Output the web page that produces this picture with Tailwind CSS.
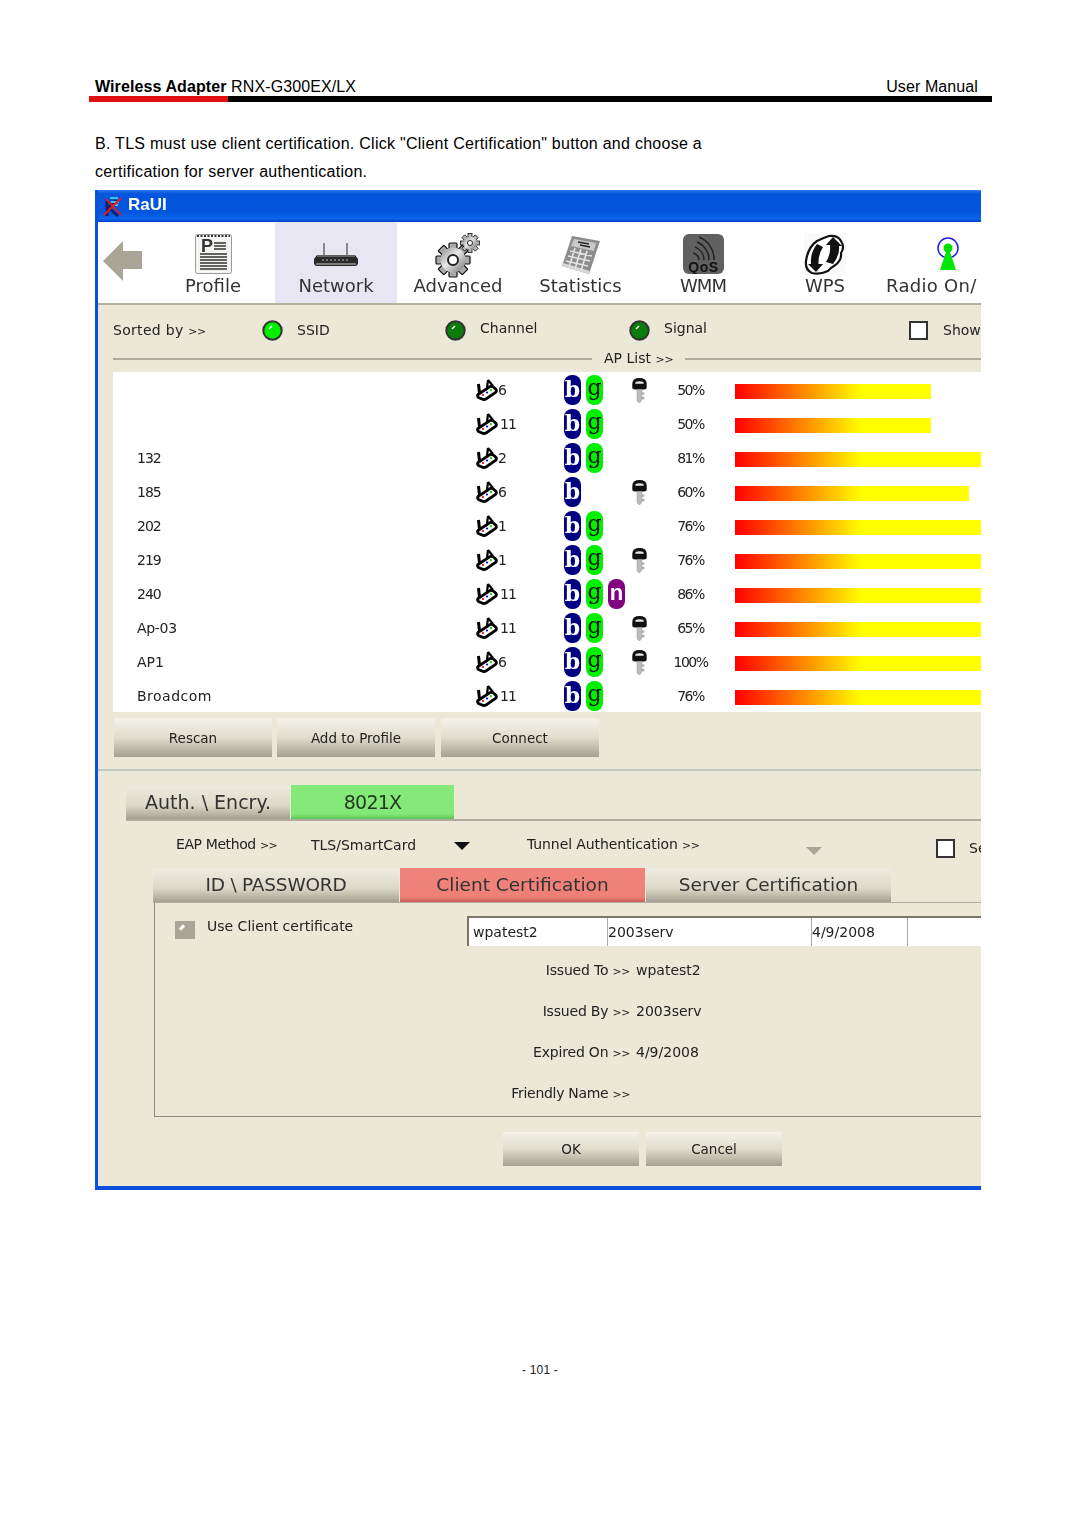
<!DOCTYPE html>
<html>
<head>
<meta charset="utf-8">
<script src="https://cdn.jsdelivr.net/npm/@tailwindcss/browser@4"></script>
</head>
<body class="bg-white">
<svg width="0" height="0" class="absolute">
  <defs>
    <linearGradient id="steel" x1="0" y1="0" x2="1" y2="1"><stop offset="0" stop-color="#8a8a8a"/><stop offset=".45" stop-color="#e8e8e8"/><stop offset="1" stop-color="#707070"/></linearGradient>
  </defs>
  <symbol id="chan" viewBox="0 0 22 22">
    <path d="M12 1 L11 9 M12 1 L17 7" stroke="#000" stroke-width="2.200" fill="none"/>
    <path d="M2.500 5 L3.500 14" stroke="#000" stroke-width="3" fill="none"/>
    <path d="M2 15.500 L14 7.500 Q16 7 18 8.500 L20 10.500 Q21 12 19.500 13.500 L10 20 Q8 21 6 20 L2.500 18.500 Q1 17 2 15.500 Z" fill="#fff" stroke="#000" stroke-width="2.800"/>
    <circle cx="7" cy="16" r="1.100" fill="#f00"/><circle cx="11" cy="13.500" r="1.100" fill="#00f"/><circle cx="15" cy="11" r="1.100" fill="#0c0"/>
  </symbol>
  <symbol id="key" viewBox="0 0 15 26">
    <path d="M0 10 V6 Q0 0 7.500 0 Q15 0 15 6 V10 Q15 12 12 12 H3 Q0 12 0 10 Z" fill="#111"/>
    <path d="M3 6 Q3 3.500 7.500 3.500 Q12 3.500 12 6 Z" fill="#e8e8e8"/>
    <path d="M5 12 H10 V23 L7.500 26 L5 24 Z" fill="#bcbcbc" stroke="#999" stroke-width=".6"/>
    <path d="M10 15 H12.500 V17.500 H10 M10 19.500 H12.500 V22 H10" fill="#aaa"/>
  </symbol>
  <symbol id="ledon" viewBox="0 0 21 21"><circle cx="10.500" cy="10.500" r="9.200" fill="#00f000" stroke="#333" stroke-width="2"/><path d="M7 9 L10 6" stroke="#fff" stroke-width="1.400"/></symbol>
  <symbol id="ledoff" viewBox="0 0 21 21"><circle cx="10.500" cy="10.500" r="9.200" fill="#0a7d0a" stroke="#333" stroke-width="2"/><path d="M7 9 L10 6" stroke="#fff" stroke-width="1.400"/></symbol>
</svg>

<div class="w-[1080px] h-[1527px] font-['Liberation_Sans',sans-serif] text-black overflow-hidden">
  <header class="pt-[77px] ml-[89px] w-[903px]">
    <div class="flex justify-between pl-[6px] pr-[14px] h-[19px] text-[16px] leading-[19px] tracking-[.1px]">
      <div><span class="font-bold">Wireless Adapter</span> RNX-G300EX/LX</div>
      <div>User Manual</div>
    </div>
    <div class="flex h-[6px]"><div class="w-[139px] bg-[#e01010]"></div><div class="flex-1 bg-black"></div></div>
  </header>
  <p class="ml-[95px] mt-[28px] w-[660px] text-[16px] leading-[28px] h-[60px] tracking-[.27px]">B. TLS must use client certification. Click "Client Certification" button and choose a certification for server authentication.</p>

  <main class="ml-[95px] w-[886px] h-[1000px] overflow-hidden border-l-[3px] border-b-[4px] border-[#0a4fdc] bg-[#ebe8d8] font-['DejaVu_Sans',sans-serif] text-[#222] text-[14px] blur-[0.3px]">
    <div class="h-[32px] -ml-[3px] pl-[8px] flex items-center gap-[6px] bg-[linear-gradient(180deg,#2f7af0_0%,#0454dc_12%,#0355dd_70%,#0a66ee_90%,#0340c0_100%)] text-white text-[17px] font-bold font-['Liberation_Sans',sans-serif]">
      <svg width="19" height="21" viewBox="0 0 19 21"><path d="M4 5 V20 M4 13 L13 4 M6 12 L15 20" stroke="#12226a" stroke-width="3" fill="none"/><path d="M7 2 H15 M8 6 H16 M10 9 H15" stroke="#35c8e8" stroke-width="2.200"/><path d="M1 19 L18 2 M3 3 L18 19" stroke="#f01818" stroke-width="1.800"/></svg>
      <span class="-mt-[2px]">RaUI</span>
    </div>

    <nav class="h-[83px] bg-white border-b-[2px] border-[#b5b2a2] flex text-[18px] text-[#333] whitespace-nowrap">
      <div class="w-[53px] pl-[5px] pt-[19px]">
        <svg width="39" height="40" viewBox="0 0 39 40"><path d="M20 0 L0 20 L20 40 V28 H39 V10 H20 Z" fill="#aaa697"/></svg>
      </div>
      <div class="w-[124px] flex flex-col items-center">
        <div class="h-[52px] pt-[11px]"><svg width="37" height="41" viewBox="0 0 37 41"><rect x=".5" y="1.500" width="36" height="39" rx="2" fill="#f4f4f2" stroke="#999"/><path d="M2 3 H35" stroke="#333" stroke-width="2" stroke-dasharray="2 1.500"/><text x="6" y="19" font-family="Liberation Sans" font-weight="700" font-size="18" fill="#333">P</text><path d="M19 10 H31 M19 13 H31 M19 16 H31 M5 21 H32 M5 24 H32 M5 27 H32 M5 30 H32 M5 33 H32 M5 36 H32" stroke="#333" stroke-width="1.600"/></svg></div>
        <span class="leading-[24px]">Profile</span>
      </div>
      <div class="w-[122px] bg-[#e9e6f4] flex flex-col items-center">
        <div class="h-[52px] pt-[21px]"><svg width="44" height="24" viewBox="0 0 44 24"><path d="M10 0 V13 M33 0 V13" stroke="#888" stroke-width="2"/><path d="M3 12 H41 L44 16 V21 L42 23 H2 L0 21 V16 Z" fill="#2a2a2a"/><path d="M2 21 H42" stroke="#999" stroke-width="1.500"/><path d="M3 13 H41" stroke="#999"/><path d="M8 17 H34" stroke="#bbb" stroke-dasharray="2 2"/></svg></div>
        <span class="leading-[24px]">Network</span>
      </div>
      <div class="w-[122px] flex flex-col items-center">
        <div class="h-[52px] pt-[11px]"><svg width="46" height="45" viewBox="0 0 46 45">
          <g fill="#a8a8a8" stroke="#111" stroke-width="1.200">
            <rect x="14" y="10" width="8" height="8" rx="1"/><rect x="14" y="10" width="8" height="8" rx="1" transform="rotate(45 18 27)"/><rect x="14" y="10" width="8" height="8" rx="1" transform="rotate(90 18 27)"/><rect x="14" y="10" width="8" height="8" rx="1" transform="rotate(135 18 27)"/><rect x="14" y="10" width="8" height="8" rx="1" transform="rotate(180 18 27)"/><rect x="14" y="10" width="8" height="8" rx="1" transform="rotate(225 18 27)"/><rect x="14" y="10" width="8" height="8" rx="1" transform="rotate(270 18 27)"/><rect x="14" y="10" width="8" height="8" rx="1" transform="rotate(315 18 27)"/>
          </g>
          <circle cx="18" cy="27" r="12.500" fill="url(#steel)"/><circle cx="18" cy="27" r="5" fill="#fff" stroke="#222" stroke-width="2"/>
          <g fill="#b8b8b8" stroke="#111" stroke-width=".8">
            <rect x="33" y="0.500" width="4" height="5"/><rect x="33" y="0.500" width="4" height="5" transform="rotate(45 35 10)"/><rect x="33" y="0.500" width="4" height="5" transform="rotate(90 35 10)"/><rect x="33" y="0.500" width="4" height="5" transform="rotate(135 35 10)"/><rect x="33" y="0.500" width="4" height="5" transform="rotate(180 35 10)"/><rect x="33" y="0.500" width="4" height="5" transform="rotate(225 35 10)"/><rect x="33" y="0.500" width="4" height="5" transform="rotate(270 35 10)"/><rect x="33" y="0.500" width="4" height="5" transform="rotate(315 35 10)"/>
          </g>
          <circle cx="35" cy="10" r="6.500" fill="url(#steel)"/><circle cx="35" cy="10" r="2.500" fill="#fff" stroke="#222"/></svg></div>
        <span class="leading-[24px]">Advanced</span>
      </div>
      <div class="w-[123px] flex flex-col items-center">
        <div class="h-[52px] pt-[14px]"><svg width="40" height="38" viewBox="0 0 40 38"><path d="M11 0 L39 5 L28 38 L1 30 Z" fill="#8d8d8d"/><path d="M1 30 L28 38 L29 35 L2 27 Z" fill="#d8d8d8"/><path d="M13 3 L35 7 L33 15 L10 10 Z" fill="#c9c9c9"/><path d="M9 15 L31 20 M7 20 L29 25 M5 25 L27 30 M14 12 L8 31 M20 13 L14 33 M26 15 L20 35" stroke="#e4e4e4" stroke-width="1.600"/><path d="M17 6 L28 8 M19 9 L29 11" stroke="#222" stroke-width="1.500"/></svg></div>
        <span class="leading-[24px]">Statistics</span>
      </div>
      <div class="w-[122px] flex flex-col items-center">
        <div class="h-[52px] pt-[12px]"><svg width="41" height="40" viewBox="0 0 41 40"><rect width="41" height="40" rx="6" fill="#606060"/><path d="M10 19 A8 8 0 0 1 16 26 M12 13 A14 14 0 0 1 21 26 M14 8 A19 19 0 0 1 26 26 M16 3 A24 24 0 0 1 31 26" stroke="#222" stroke-width="1.600" fill="none"/><text x="20.500" y="38" text-anchor="middle" font-family="Liberation Sans" font-weight="700" font-size="14" letter-spacing=".6" fill="#111">QoS</text></svg></div>
        <span class="leading-[24px] tracking-[-1px]">WMM</span>
      </div>
      <div class="w-[122px] flex flex-col items-center">
        <div class="h-[52px] pt-[11px]"><svg width="42" height="42" viewBox="0 0 42 42"><rect width="42" height="42" fill="#fafafa"/><path d="M25 3 Q34 2 37 8 Q41 14 37 20 Q38 28 30 33 Q26 35 24 38 Q15 42 8 40 Q1 37 2 28 Q4 14 13 8 Q19 5 25 3 Z" fill="#fff" stroke="#111" stroke-width="2.200"/><path d="M13 11 Q6 20 7 31 L4 31 L12 39 L19 31 L14.500 31 Q14 22 19 14 Z" fill="#111"/><path d="M29 31 Q36 22 35 13 L38 13 L29 4 L22 12 L26 12 Q27 21 22 29 Z" fill="#111"/></svg></div>
        <span class="leading-[24px]">WPS</span>
      </div>
      <div class="flex flex-col">
        <div class="h-[52px] pt-[15px] pl-[50px]"><svg width="24" height="35" viewBox="0 0 24 35"><circle cx="12" cy="11" r="10" fill="#fff" stroke="#2020e0" stroke-width="1.500"/><circle cx="12" cy="11" r="4.500" fill="#00e000"/><path d="M10 15 H14 L20 33 H4 Z" fill="#00e800"/></svg></div>
        <span class="leading-[24px] tracking-[.3px]">Radio On/</span>
      </div>
    </nav>

    <section class="h-[67px] whitespace-nowrap">
      <div class="flex items-center h-[50px] pl-[15px] text-[14px] [&>*]:shrink-0">
        <span class="w-[149px] tracking-[.3px]">Sorted by <span class="text-[11px] tracking-[-.5px]">&gt;&gt;</span></span>
        <svg width="21" height="21" class="mt-[1px]"><use href="#ledon"/></svg>
        <span class="w-[148px] ml-[14px]">SSID</span>
        <svg width="21" height="21"><use href="#ledoff"/></svg>
        <span class="w-[149px] ml-[14px] -mt-[3px]">Channel</span>
        <svg width="21" height="21"><use href="#ledoff"/></svg>
        <span class="w-[245px] ml-[14px] -mt-[3px]">Signal</span>
        <span class="w-[19px] h-[19px] bg-white border-2 border-[#333] mr-[15px]"></span>
        <span>Show</span>
      </div>
      <div class="flex items-center ml-[15px] h-[16px] -mt-[4px]">
        <div class="w-[479px] h-[2px] bg-[#b0ad9e]"></div>
        <span class="w-[93px] pl-[12px] shrink-0 -mt-[2px]">AP List <span class="text-[11px]">&gt;&gt;</span></span>
        <div class="flex-1 h-[2px] bg-[#b0ad9e]"></div>
      </div>
    </section>

    <section id="list" class="ml-[15px] h-[340px] pt-[1px] bg-white overflow-hidden whitespace-nowrap text-[14px] [&>div>*]:shrink-0">
      <div class="flex items-center h-[34px]"><span class="w-[363px]"></span><svg width="22" height="22"><use href="#chan"/></svg><span class="w-[66px] tracking-[-1px]">6</span><span class="flex gap-[5px] w-[68px]"><b class="w-[17px] h-[30px] rounded-[8px] bg-[#000080] text-white text-center font-['DejaVu_Serif',serif] text-[22px] leading-[28px] font-bold">b</b><b class="w-[17px] h-[30px] rounded-[8px] bg-[#00f000] text-[#111] text-center font-['DejaVu_Serif',serif] text-[22px] leading-[25px] font-normal">g</b></span><svg width="15" height="25"><use href="#key"/></svg><span class="w-[73px] text-center ml-[7px] -mr-[7px] tracking-[-1.500px]">50%</span><span class="ml-[15px] mt-[3px] h-[15px] w-[196px] bg-[linear-gradient(90deg,#f00,#ff0_127px)]"></span></div>
      <div class="flex items-center h-[34px]"><span class="w-[363px]"></span><svg width="22" height="22"><use href="#chan"/></svg><span class="w-[66px] pl-[2px] tracking-[-1px]">11</span><span class="flex gap-[5px] w-[68px]"><b class="w-[17px] h-[30px] rounded-[8px] bg-[#000080] text-white text-center font-['DejaVu_Serif',serif] text-[22px] leading-[28px] font-bold">b</b><b class="w-[17px] h-[30px] rounded-[8px] bg-[#00f000] text-[#111] text-center font-['DejaVu_Serif',serif] text-[22px] leading-[25px] font-normal">g</b></span><span class="w-[15px]"></span><span class="w-[73px] text-center ml-[7px] -mr-[7px] tracking-[-1.500px]">50%</span><span class="ml-[15px] mt-[3px] h-[15px] w-[196px] bg-[linear-gradient(90deg,#f00,#ff0_127px)]"></span></div>
      <div class="flex items-center h-[34px]"><span class="w-[24px]"></span><span class="w-[339px] tracking-[-1px]">132</span><svg width="22" height="22"><use href="#chan"/></svg><span class="w-[66px] tracking-[-1px]">2</span><span class="flex gap-[5px] w-[68px]"><b class="w-[17px] h-[30px] rounded-[8px] bg-[#000080] text-white text-center font-['DejaVu_Serif',serif] text-[22px] leading-[28px] font-bold">b</b><b class="w-[17px] h-[30px] rounded-[8px] bg-[#00f000] text-[#111] text-center font-['DejaVu_Serif',serif] text-[22px] leading-[25px] font-normal">g</b></span><span class="w-[15px]"></span><span class="w-[73px] text-center ml-[7px] -mr-[7px] tracking-[-1.500px]">81%</span><span class="ml-[15px] mt-[3px] h-[15px] w-[318px] bg-[linear-gradient(90deg,#f00,#ff0_127px)]"></span></div>
      <div class="flex items-center h-[34px]"><span class="w-[24px]"></span><span class="w-[339px] tracking-[-1px]">185</span><svg width="22" height="22"><use href="#chan"/></svg><span class="w-[66px] tracking-[-1px]">6</span><span class="flex gap-[5px] w-[68px]"><b class="w-[17px] h-[30px] rounded-[8px] bg-[#000080] text-white text-center font-['DejaVu_Serif',serif] text-[22px] leading-[28px] font-bold">b</b></span><svg width="15" height="25"><use href="#key"/></svg><span class="w-[73px] text-center ml-[7px] -mr-[7px] tracking-[-1.500px]">60%</span><span class="ml-[15px] mt-[3px] h-[15px] w-[234px] bg-[linear-gradient(90deg,#f00,#ff0_127px)]"></span></div>
      <div class="flex items-center h-[34px]"><span class="w-[24px]"></span><span class="w-[339px] tracking-[-1px]">202</span><svg width="22" height="22"><use href="#chan"/></svg><span class="w-[66px] tracking-[-1px]">1</span><span class="flex gap-[5px] w-[68px]"><b class="w-[17px] h-[30px] rounded-[8px] bg-[#000080] text-white text-center font-['DejaVu_Serif',serif] text-[22px] leading-[28px] font-bold">b</b><b class="w-[17px] h-[30px] rounded-[8px] bg-[#00f000] text-[#111] text-center font-['DejaVu_Serif',serif] text-[22px] leading-[25px] font-normal">g</b></span><span class="w-[15px]"></span><span class="w-[73px] text-center ml-[7px] -mr-[7px] tracking-[-1.500px]">76%</span><span class="ml-[15px] mt-[3px] h-[15px] w-[298px] bg-[linear-gradient(90deg,#f00,#ff0_127px)]"></span></div>
      <div class="flex items-center h-[34px]"><span class="w-[24px]"></span><span class="w-[339px] tracking-[-1px]">219</span><svg width="22" height="22"><use href="#chan"/></svg><span class="w-[66px] tracking-[-1px]">1</span><span class="flex gap-[5px] w-[68px]"><b class="w-[17px] h-[30px] rounded-[8px] bg-[#000080] text-white text-center font-['DejaVu_Serif',serif] text-[22px] leading-[28px] font-bold">b</b><b class="w-[17px] h-[30px] rounded-[8px] bg-[#00f000] text-[#111] text-center font-['DejaVu_Serif',serif] text-[22px] leading-[25px] font-normal">g</b></span><svg width="15" height="25"><use href="#key"/></svg><span class="w-[73px] text-center ml-[7px] -mr-[7px] tracking-[-1.500px]">76%</span><span class="ml-[15px] mt-[3px] h-[15px] w-[298px] bg-[linear-gradient(90deg,#f00,#ff0_127px)]"></span></div>
      <div class="flex items-center h-[34px]"><span class="w-[24px]"></span><span class="w-[339px] tracking-[-1px]">240</span><svg width="22" height="22"><use href="#chan"/></svg><span class="w-[66px] pl-[2px] tracking-[-1px]">11</span><span class="flex gap-[5px] w-[68px]"><b class="w-[17px] h-[30px] rounded-[8px] bg-[#000080] text-white text-center font-['DejaVu_Serif',serif] text-[22px] leading-[28px] font-bold">b</b><b class="w-[17px] h-[30px] rounded-[8px] bg-[#00f000] text-[#111] text-center font-['DejaVu_Serif',serif] text-[22px] leading-[25px] font-normal">g</b><b class="w-[17px] h-[30px] shrink-0 rounded-[8px] bg-[#800080] text-white text-center font-['Liberation_Sans',sans-serif] text-[22px] leading-[28px] font-bold">n</b></span><span class="w-[15px]"></span><span class="w-[73px] text-center ml-[7px] -mr-[7px] tracking-[-1.500px]">86%</span><span class="ml-[15px] mt-[3px] h-[15px] w-[337px] bg-[linear-gradient(90deg,#f00,#ff0_127px)]"></span></div>
      <div class="flex items-center h-[34px]"><span class="w-[24px]"></span><span class="w-[339px] tracking-[-.3px]">Ap-03</span><svg width="22" height="22"><use href="#chan"/></svg><span class="w-[66px] pl-[2px] tracking-[-1px]">11</span><span class="flex gap-[5px] w-[68px]"><b class="w-[17px] h-[30px] rounded-[8px] bg-[#000080] text-white text-center font-['DejaVu_Serif',serif] text-[22px] leading-[28px] font-bold">b</b><b class="w-[17px] h-[30px] rounded-[8px] bg-[#00f000] text-[#111] text-center font-['DejaVu_Serif',serif] text-[22px] leading-[25px] font-normal">g</b></span><svg width="15" height="25"><use href="#key"/></svg><span class="w-[73px] text-center ml-[7px] -mr-[7px] tracking-[-1.500px]">65%</span><span class="ml-[15px] mt-[3px] h-[15px] w-[255px] bg-[linear-gradient(90deg,#f00,#ff0_127px)]"></span></div>
      <div class="flex items-center h-[34px]"><span class="w-[24px]"></span><span class="w-[339px]">AP1</span><svg width="22" height="22"><use href="#chan"/></svg><span class="w-[66px] tracking-[-1px]">6</span><span class="flex gap-[5px] w-[68px]"><b class="w-[17px] h-[30px] rounded-[8px] bg-[#000080] text-white text-center font-['DejaVu_Serif',serif] text-[22px] leading-[28px] font-bold">b</b><b class="w-[17px] h-[30px] rounded-[8px] bg-[#00f000] text-[#111] text-center font-['DejaVu_Serif',serif] text-[22px] leading-[25px] font-normal">g</b></span><svg width="15" height="25"><use href="#key"/></svg><span class="w-[73px] text-center ml-[7px] -mr-[7px] tracking-[-1.500px]">100%</span><span class="ml-[15px] mt-[3px] h-[15px] w-[392px] bg-[linear-gradient(90deg,#f00,#ff0_127px)]"></span></div>
      <div class="flex items-center h-[34px]"><span class="w-[24px]"></span><span class="w-[339px] tracking-[.5px]">Broadcom</span><svg width="22" height="22"><use href="#chan"/></svg><span class="w-[66px] pl-[2px] tracking-[-1px]">11</span><span class="flex gap-[5px] w-[68px]"><b class="w-[17px] h-[30px] rounded-[8px] bg-[#000080] text-white text-center font-['DejaVu_Serif',serif] text-[22px] leading-[28px] font-bold">b</b><b class="w-[17px] h-[30px] rounded-[8px] bg-[#00f000] text-[#111] text-center font-['DejaVu_Serif',serif] text-[22px] leading-[25px] font-normal">g</b></span><span class="w-[15px]"></span><span class="w-[73px] text-center ml-[7px] -mr-[7px] tracking-[-1.500px]">76%</span><span class="ml-[15px] mt-[3px] h-[15px] w-[298px] bg-[linear-gradient(90deg,#f00,#ff0_127px)]"></span></div>
    </section>

    <section class="h-[59px] pl-[16px] pt-[6px] flex items-start border-b-[2px] border-[#bccabf] text-[13.500px]">
      <div class="w-[158px] h-[39px] pt-[1px] flex items-center justify-center bg-[linear-gradient(180deg,#f4f3ea,#e0ddcd_50%,#a5a192)]">Rescan</div>
      <div class="w-[158px] h-[39px] pt-[1px] ml-[5px] flex items-center justify-center bg-[linear-gradient(180deg,#f4f3ea,#e0ddcd_50%,#a5a192)]">Add to Profile</div>
      <div class="w-[158px] h-[39px] pt-[1px] ml-[6px] flex items-center justify-center bg-[linear-gradient(180deg,#f4f3ea,#e0ddcd_50%,#a5a192)]">Connect</div>
    </section>

    <section class="ml-[28px] mt-[14px] h-[36px] flex border-b-[2px] border-[#b0ad9e] text-[19px] text-[#333]">
      <div class="w-[164px] flex items-center justify-center bg-[linear-gradient(180deg,#eeece0,#dcd9c9_60%,#a5a192)]">Auth. \ Encry.</div>
      <div class="w-[163px] ml-[1px] flex items-center justify-center bg-[#84e878] bg-[linear-gradient(180deg,#86ea7a,#84e878_85%,#5cc454)] text-[#1e3a1c] tracking-[-.8px]">8021X</div>
    </section>

    <section class="h-[47px] pl-[78px] flex items-center whitespace-nowrap text-[14px] [&>*]:shrink-0">
      <span class="w-[135px] tracking-[-.4px]">EAP Method <span class="text-[11px] tracking-[-.5px]">&gt;&gt;</span></span>
      <span class="w-[143px] mt-[2px]">TLS/SmartCard</span>
      <svg class="mt-[2px]" width="16" height="8"><path d="M0 0 H16 L8 8 Z" fill="#111"/></svg>
      <span class="w-[279px] ml-[57px] tracking-[-.1px]">Tunnel Authentication <span class="text-[11px] tracking-[-.5px]">&gt;&gt;</span></span>
      <svg class="mt-[12px]" width="16" height="8"><path d="M0 0 H16 L8 8 Z" fill="#aaa697"/></svg>
      <span class="w-[19px] h-[19px] ml-[114px] mt-[8px] bg-white border-2 border-[#333]"></span>
      <span class="ml-[14px] mt-[8px]">Se</span>
    </section>

    <section class="ml-[55px] h-[35px] flex text-[18.500px] text-[#333] border-b border-[#b0ad9e]">
      <div class="w-[246px] flex items-center justify-center bg-[linear-gradient(180deg,#eeece0,#dcd9c9_60%,#a5a192)] tracking-[-.2px]">ID \ PASSWORD</div>
      <div class="w-[245px] ml-[1px] flex items-center justify-center bg-[#ee8078] bg-[linear-gradient(180deg,#f0837b,#ee8078_85%,#c85c54)]">Client Certification</div>
      <div class="w-[245px] ml-[1px] flex items-center justify-center bg-[linear-gradient(180deg,#eeece0,#dcd9c9_60%,#a5a192)]">Server Certification</div>
    </section>

    <section class="ml-[56px] h-[214px] border-l border-b border-[#8e8b7c] whitespace-nowrap">
      <div class="flex h-[47px] pt-[13px]">
        <span class="ml-[20px] mt-[5px] w-[20px] h-[18px] bg-[#aaa697] relative shrink-0"><i class="absolute left-[4px] top-[5px] w-[6px] h-[3px] bg-white -rotate-45"></i></span>
        <span class="ml-[12px] w-[260px] shrink-0">Use Client certificate</span>
        <div class="w-[514px] shrink-0 h-[30px] bg-white border-t-[2px] border-l-[2px] border-[#7a776a] flex items-center">
          <span class="w-[139px] pl-[4px] h-full leading-[28px] border-r border-[#aaa] shrink-0">wpatest2</span>
          <span class="w-[204px] h-full leading-[28px] border-r border-[#aaa] shrink-0">2003serv</span>
          <span class="w-[96px] h-full leading-[28px] border-r border-[#aaa] shrink-0">4/9/2008</span>
        </div>
      </div>
      <div class="flex items-center h-[41px]"><span class="w-[475px] text-right tracking-[-.2px]">Issued To <span class="text-[11px] tracking-[-.5px]">&gt;&gt;</span></span><span class="ml-[6px]">wpatest2</span></div>
      <div class="flex items-center h-[41px]"><span class="w-[475px] text-right tracking-[-.2px]">Issued By <span class="text-[11px] tracking-[-.5px]">&gt;&gt;</span></span><span class="ml-[6px]">2003serv</span></div>
      <div class="flex items-center h-[41px]"><span class="w-[475px] text-right tracking-[-.2px]">Expired On <span class="text-[11px] tracking-[-.5px]">&gt;&gt;</span></span><span class="ml-[6px]">4/9/2008</span></div>
      <div class="flex items-center h-[41px]"><span class="w-[475px] text-right tracking-[-.3px]">Friendly Name <span class="text-[11px] tracking-[-.5px]">&gt;&gt;</span></span></div>
    </section>

    <section class="pl-[405px] pt-[15px] flex gap-[7px] text-[13.500px]">
      <div class="w-[136px] h-[34px] flex items-center justify-center bg-[linear-gradient(180deg,#f4f3ea,#e0ddcd_50%,#a5a192)]">OK</div>
      <div class="w-[136px] h-[34px] flex items-center justify-center bg-[linear-gradient(180deg,#f4f3ea,#e0ddcd_50%,#a5a192)]">Cancel</div>
    </section>
  </main>

  <footer class="mt-[173px] text-center text-[12px] leading-[14px] text-[#222] tracking-[.2px]">- 101 -</footer>
</div>
</body>
</html>
